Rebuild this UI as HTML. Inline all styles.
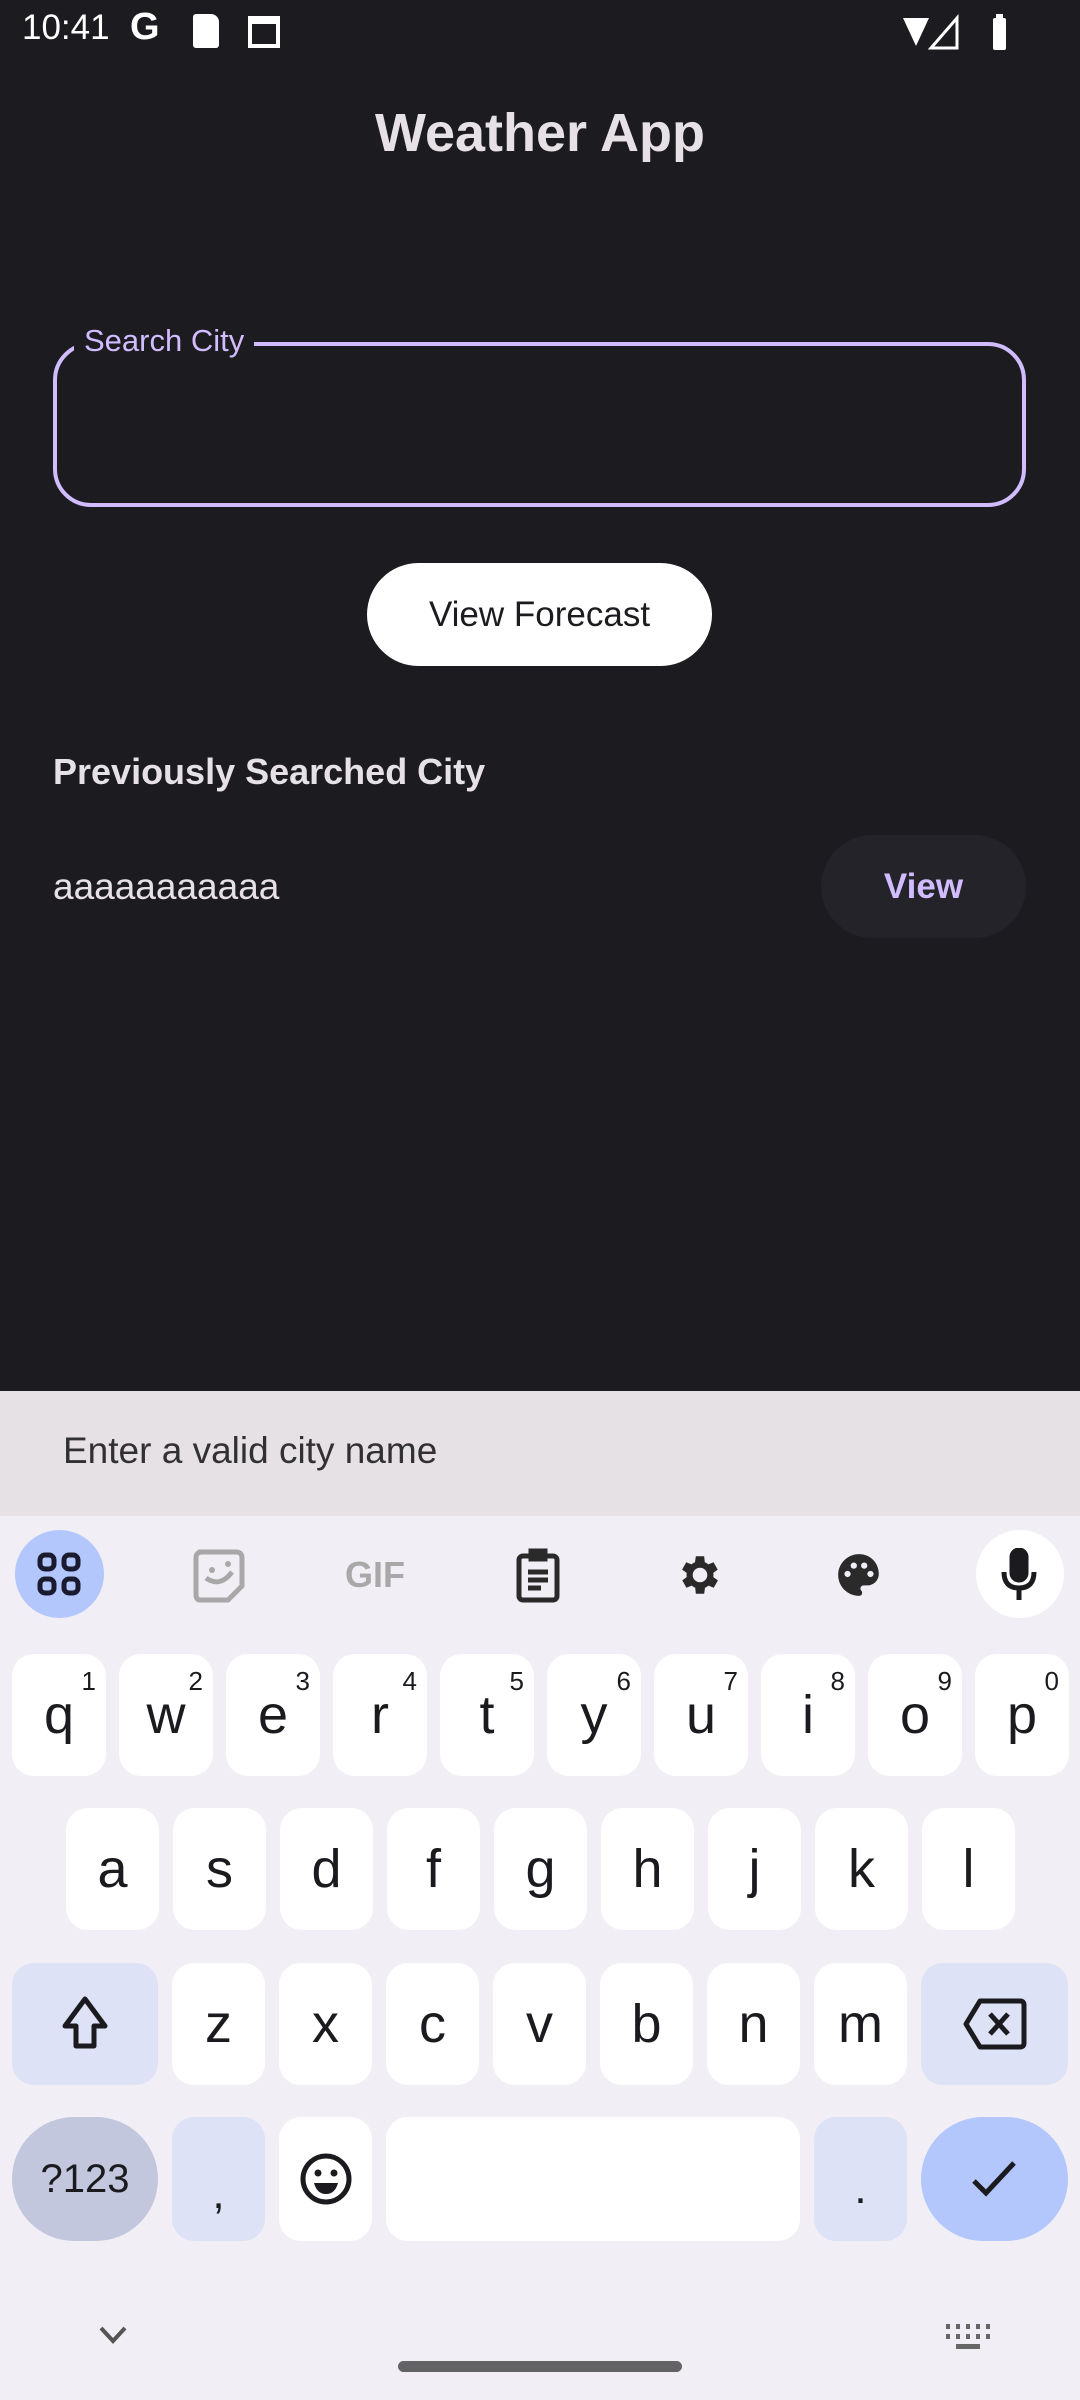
<!DOCTYPE html>
<html><head><meta charset="utf-8"><style>
*{margin:0;padding:0;box-sizing:border-box}
body{width:1080px;height:2400px;background:#1c1b1f;font-family:"Liberation Sans",sans-serif;position:relative;overflow:hidden}
.a{position:absolute}
.k{position:absolute;background:#fff;border-radius:22px;display:flex;align-items:center;justify-content:center;font-size:54px;color:#1b1b1f}
.k sup{position:absolute;top:12px;right:10px;font-size:26px;color:#1b1b1f}
.s{background:#dde2f6}
</style></head><body>
<!-- status bar -->
<div class="a" style="left:22px;top:8px;font-size:35px;color:#fff">10:41</div>
<div class="a" style="left:130px;top:6px;font-size:38px;font-weight:bold;color:#fff">G</div>
<div class="a" style="left:193px;top:14px;width:26px;height:34px;background:#fff;border-radius:3px 8px 3px 3px"></div>
<div class="a" style="left:248px;top:16px;width:32px;height:32px;border:4px solid #fff;border-top-width:8px"></div>
<svg class="a" style="left:895px;top:12px" width="140" height="40"><path d="M8 6 L34 6 L21 34Z" fill="#fff"/><path d="M62 6 L62 36 L36 36Z" fill="none" stroke="#fff" stroke-width="3"/><rect x="98" y="6" width="13" height="32" rx="2" fill="#fff"/><rect x="101" y="2" width="7" height="5" fill="#fff"/></svg>
<!-- title -->
<div class="a" style="left:0;width:1080px;top:102px;text-align:center;font-size:54px;font-weight:bold;color:#e6e1e5">Weather App</div>
<!-- field -->
<div class="a" style="left:53px;top:342px;width:973px;height:165px;border:4px solid #d0bcff;border-radius:38px"></div>
<div class="a" style="left:74px;top:321px;padding:0 10px;background:#1c1b1f;font-size:31px;color:#d0bcff;line-height:40px">Search City</div>
<!-- button -->
<div class="a" style="left:367px;top:563px;width:345px;height:103px;background:#fff;border-radius:52px;display:flex;align-items:center;justify-content:center;font-size:35px;color:#1c1b1f">View Forecast</div>
<div class="a" style="left:53px;top:751px;font-size:36px;font-weight:bold;color:#e6e1e5">Previously Searched City</div>
<div class="a" style="left:53px;top:866px;font-size:37px;color:#e6e1e5">aaaaaaaaaaa</div>
<div class="a" style="left:821px;top:835px;width:205px;height:103px;background:#25232a;border-radius:52px;display:flex;align-items:center;justify-content:center;font-size:35px;font-weight:bold;color:#d0bcff">View</div>
<!-- snackbar -->
<div class="a" style="left:0;top:1391px;width:1080px;height:125px;background:#e6e1e5"></div>
<div class="a" style="left:63px;top:1430px;font-size:37px;color:#313033">Enter a valid city name</div>
<!-- keyboard -->
<div class="a" style="left:0;top:1516px;width:1080px;height:884px;background:#f1eff5"></div>
<div class="a" style="left:15px;top:1530px;width:89px;height:88px;border-radius:50%;background:#b3c7fd"></div>
<svg class="a" style="left:37px;top:1552px" width="44" height="44" fill="none" stroke="#1b1b2f" stroke-width="5"><rect x="3" y="3" width="14" height="14" rx="5"/><rect x="27" y="3" width="14" height="14" rx="5"/><rect x="3" y="27" width="14" height="14" rx="5"/><rect x="27" y="27" width="14" height="14" rx="5"/></svg>
<svg class="a" style="left:192px;top:1548px" width="54" height="56"><path d="M6 4 H44 Q50 4 50 10 V38 L36 52 H8 Q4 52 4 46 V10 Q4 4 10 4Z" fill="none" stroke="#a8a8a8" stroke-width="5"/><circle cx="20" cy="22" r="3" fill="#a8a8a8"/><circle cx="36" cy="16" r="3" fill="#a8a8a8"/><path d="M14 30 Q28 40 40 24" stroke="#a8a8a8" stroke-width="5" fill="none"/></svg>
<div class="a" style="left:345px;top:1554px;font-size:36px;font-weight:bold;color:#a8a8a8">GIF</div>
<svg class="a" style="left:515px;top:1548px" width="46" height="56" fill="none" stroke="#2a2a2a" stroke-width="5"><rect x="4" y="8" width="38" height="44" rx="4"/><rect x="16" y="3" width="14" height="8" fill="#2a2a2a"/><path d="M13 24H33M13 32H33M13 40H26"/></svg>
<svg class="a" style="left:675px;top:1550px" width="50" height="50" viewBox="0 0 24 24"><path fill="#2a2a2a" d="M19.4 13a7.5 7.5 0 0 0 0-2l2.1-1.6-2-3.5-2.5 1a7 7 0 0 0-1.7-1L15 3h-4l-.4 2.9a7 7 0 0 0-1.7 1l-2.5-1-2 3.5L6.6 11a7.5 7.5 0 0 0 0 2l-2.1 1.6 2 3.5 2.5-1a7 7 0 0 0 1.7 1L11 21h4l.4-2.9a7 7 0 0 0 1.7-1l2.5 1 2-3.5zM13 15.5a3.5 3.5 0 1 1 0-7 3.5 3.5 0 0 1 0 7z" transform="translate(-1 0)"/></svg>
<svg class="a" style="left:834px;top:1548px" width="50" height="54" viewBox="0 0 24 24"><path fill="#2a2a2a" d="M12 2C6.5 2 2 6.5 2 12s4.5 10 10 10c1 0 1.5-.7 1.5-1.5 0-.4-.2-.8-.4-1-.3-.3-.4-.6-.4-1 0-.8.7-1.5 1.5-1.5H16c3 0 5.5-2.5 5.5-5.5C21.5 6 17.3 2 12 2zM6.5 13a1.5 1.5 0 1 1 0-3 1.5 1.5 0 0 1 0 3zm3-4a1.5 1.5 0 1 1 0-3 1.5 1.5 0 0 1 0 3zm5 0a1.5 1.5 0 1 1 0-3 1.5 1.5 0 0 1 0 3zm3 4a1.5 1.5 0 1 1 0-3 1.5 1.5 0 0 1 0 3z"/></svg>
<div class="a" style="left:976px;top:1530px;width:88px;height:88px;border-radius:50%;background:#fff"></div>
<svg class="a" style="left:998px;top:1548px" width="44" height="54" fill="none" stroke="#1b1b1f" stroke-width="5"><rect x="14" y="2" width="14" height="30" rx="7" fill="#1b1b1f"/><path d="M6 24 Q6 40 21 40 Q36 40 36 24M21 40V52"/></svg>
<!-- row1 -->
<div class="k" style="left:12px;top:1654px;width:94px;height:122px">q<sup>1</sup></div>
<div class="k" style="left:119px;top:1654px;width:94px;height:122px">w<sup>2</sup></div>
<div class="k" style="left:226px;top:1654px;width:94px;height:122px">e<sup>3</sup></div>
<div class="k" style="left:333px;top:1654px;width:94px;height:122px">r<sup>4</sup></div>
<div class="k" style="left:440px;top:1654px;width:94px;height:122px">t<sup>5</sup></div>
<div class="k" style="left:547px;top:1654px;width:94px;height:122px">y<sup>6</sup></div>
<div class="k" style="left:654px;top:1654px;width:94px;height:122px">u<sup>7</sup></div>
<div class="k" style="left:761px;top:1654px;width:94px;height:122px">i<sup>8</sup></div>
<div class="k" style="left:868px;top:1654px;width:94px;height:122px">o<sup>9</sup></div>
<div class="k" style="left:975px;top:1654px;width:94px;height:122px">p<sup>0</sup></div>
<!-- row2 -->
<div class="k" style="left:66px;top:1808px;width:93px;height:122px">a</div>
<div class="k" style="left:173px;top:1808px;width:93px;height:122px">s</div>
<div class="k" style="left:280px;top:1808px;width:93px;height:122px">d</div>
<div class="k" style="left:387px;top:1808px;width:93px;height:122px">f</div>
<div class="k" style="left:494px;top:1808px;width:93px;height:122px">g</div>
<div class="k" style="left:601px;top:1808px;width:93px;height:122px">h</div>
<div class="k" style="left:708px;top:1808px;width:93px;height:122px">j</div>
<div class="k" style="left:815px;top:1808px;width:93px;height:122px">k</div>
<div class="k" style="left:922px;top:1808px;width:93px;height:122px">l</div>
<!-- row3 -->
<div class="k s" style="left:12px;top:1963px;width:146px;height:122px"><svg width="50" height="60" viewBox="0 0 50 60"><path d="M25 5 L45 32 H34 V52 H16 V32 H5Z" fill="none" stroke="#1b1b1f" stroke-width="5" stroke-linejoin="round"/></svg></div>
<div class="k" style="left:172px;top:1963px;width:93px;height:122px">z</div>
<div class="k" style="left:279px;top:1963px;width:93px;height:122px">x</div>
<div class="k" style="left:386px;top:1963px;width:93px;height:122px">c</div>
<div class="k" style="left:493px;top:1963px;width:93px;height:122px">v</div>
<div class="k" style="left:600px;top:1963px;width:93px;height:122px">b</div>
<div class="k" style="left:707px;top:1963px;width:93px;height:122px">n</div>
<div class="k" style="left:814px;top:1963px;width:93px;height:122px">m</div>
<div class="k s" style="left:921px;top:1963px;width:147px;height:122px"><svg width="66" height="54" viewBox="0 0 66 54"><path d="M18 4 H58 Q62 4 62 8 V46 Q62 50 58 50 H18 L4 27Z" fill="none" stroke="#1b1b1f" stroke-width="5" stroke-linejoin="round"/><path d="M28 17 L46 37 M46 17 L28 37" stroke="#1b1b1f" stroke-width="5"/></svg></div>
<!-- row4 -->
<div class="k" style="left:12px;top:2117px;width:146px;height:124px;border-radius:62px;background:#c2c7de;font-size:40px">?123</div>
<div class="k s" style="left:172px;top:2117px;width:93px;height:124px;font-size:44px;padding-top:30px">,</div>
<div class="k" style="left:279px;top:2117px;width:93px;height:124px"><svg width="54" height="54" viewBox="0 0 54 54"><circle cx="27" cy="27" r="23" fill="none" stroke="#1b1b1f" stroke-width="5"/><circle cx="19" cy="21" r="3.5" fill="#1b1b1f"/><circle cx="35" cy="21" r="3.5" fill="#1b1b1f"/><path d="M15 31 H39 Q36 42 27 42 Q18 42 15 31Z" fill="#1b1b1f"/></svg></div>
<div class="k" style="left:386px;top:2117px;width:414px;height:124px"></div>
<div class="k s" style="left:814px;top:2117px;width:93px;height:124px;font-size:44px;padding-top:20px">.</div>
<div class="k" style="left:921px;top:2117px;width:147px;height:124px;border-radius:62px;background:#b3c7fd"><svg width="50" height="40" viewBox="0 0 50 40"><path d="M4 22 L16 34 L44 4" fill="none" stroke="#1b1b1f" stroke-width="5"/></svg></div>
<!-- bottom -->
<svg class="a" style="left:98px;top:2324px" width="30" height="22"><path d="M3 4 L15 17 L27 4" fill="none" stroke="#555" stroke-width="4"/></svg>
<svg class="a" style="left:946px;top:2324px" width="44" height="30" fill="#666"><rect x="0" y="0" width="4" height="5"/><rect x="10" y="0" width="4" height="5"/><rect x="20" y="0" width="4" height="5"/><rect x="30" y="0" width="4" height="5"/><rect x="40" y="0" width="4" height="5"/><rect x="0" y="10" width="4" height="5"/><rect x="10" y="10" width="4" height="5"/><rect x="20" y="10" width="4" height="5"/><rect x="30" y="10" width="4" height="5"/><rect x="40" y="10" width="4" height="5"/><rect x="10" y="20" width="24" height="5"/></svg>
<div class="a" style="left:398px;top:2361px;width:284px;height:11px;border-radius:6px;background:#636366"></div>
</body></html>
